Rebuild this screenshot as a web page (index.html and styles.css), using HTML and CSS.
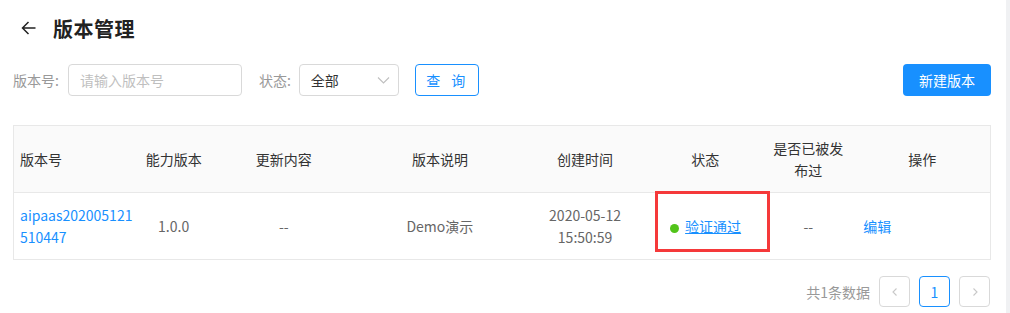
FILE: index.html
```html
<!DOCTYPE html>
<html lang="zh-CN">
<head>
    <meta charset="UTF-8">
    <title>版本管理</title>
    <link rel="stylesheet" href="styles.css">
</head>
<body>
    <div class="page">
        <div class="title-bar">
            <svg class="back" width="16" height="16" viewBox="0 0 16 16">
                <path d="M14.5 8H1.5M7.5 2L1.5 8l6 6" fill="none" stroke="#222" stroke-width="1.5"/>
            </svg>
            <h1>版本管理</h1>
        </div>

        <div class="filters">
            <label class="label">版本号:</label>
            <input class="input" type="text" placeholder="请输入版本号">
            <label class="label status-label">状态:</label>
            <div class="select">
                <span>全部</span>
                <svg width="13" height="12" viewBox="0 0 13 12">
                    <path d="M1 3.5l5.5 5.5 5.5-5.5" fill="none" stroke="#bfbfbf" stroke-width="1.1"/>
                </svg>
            </div>
            <button class="btn-ghost">查 询</button>
            <button class="btn-primary">新建版本</button>
        </div>

        <table class="grid">
            <colgroup>
                <col style="width:124px">
                <col style="width:72px">
                <col style="width:148px">
                <col style="width:164px">
                <col style="width:126px">
                <col style="width:114px">
                <col style="width:92px">
                <col style="width:136px">
            </colgroup>
            <thead>
                <tr>
                    <th class="left">版本号</th>
                    <th>能力版本</th>
                    <th>更新内容</th>
                    <th>版本说明</th>
                    <th>创建时间</th>
                    <th>状态</th>
                    <th>是否已被发布过</th>
                    <th>操作</th>
                </tr>
            </thead>
            <tbody>
                <tr>
                    <td class="left"><a class="link">aipaas202005121510447</a></td>
                    <td>1.0.0</td>
                    <td>--</td>
                    <td>Demo演示</td>
                    <td>2020-05-12<br>15:50:59</td>
                    <td class="status-cell">
                        <span class="dot"></span><a class="link underline">验证通过</a>
                        <div class="mark"></div>
                    </td>
                    <td>--</td>
                    <td class="op"><a class="link">编辑</a></td>
                </tr>
            </tbody>
        </table>

        <div class="pager">
            <span class="total">共1条数据</span>
            <button class="pg">
                <svg width="10" height="10" viewBox="0 0 10 10"><path d="M6.5 1.5L3 5l3.5 3.5" fill="none" stroke="#c8c8c8" stroke-width="1.1"/></svg>
            </button>
            <button class="pg active">1</button>
            <button class="pg">
                <svg width="10" height="10" viewBox="0 0 10 10"><path d="M3.5 1.5L7 5l-3.5 3.5" fill="none" stroke="#c8c8c8" stroke-width="1.1"/></svg>
            </button>
        </div>
    </div>
</body>
</html>
```

FILE: styles.css
```css
html, body {
    margin: 0;
    background-color: #f0f1f3;
}
body {
    font-family: "Noto Sans CJK SC", "Noto Sans", sans-serif;
    font-size: 14px;
    color: #333;
}
.page {
    width: 1006px;
    height: 313px;
    background-color: #fff;
    box-sizing: border-box;
    padding: 0 15px 0 13px;
}
.title-bar {
    display: flex;
    align-items: center;
    height: 56px;
    padding-left: 8px;
}
.back {
    margin-right: 16px;
}
h1 {
    margin: 0;
    font-size: 20px;
    font-weight: bold;
    color: #222;
    letter-spacing: 0.5px;
}
.filters {
    display: flex;
    align-items: center;
    height: 32px;
    margin-top: 8px;
}
.label {
    color: #999;
    margin-right: 9px;
}
.status-label {
    margin-left: 17px;
    margin-right: 8px;
}
.input {
    width: 174px;
    height: 32px;
    box-sizing: border-box;
    border: 1px solid #d9d9d9;
    border-radius: 4px;
    padding: 0 11px;
    font-family: inherit;
    font-size: 14px;
    outline: none;
}
.input::placeholder {
    color: #bfbfbf;
}
.select {
    width: 100px;
    height: 32px;
    box-sizing: border-box;
    border: 1px solid #d9d9d9;
    border-radius: 4px;
    padding: 0 8px 0 11px;
    display: flex;
    align-items: center;
    justify-content: space-between;
    color: #333;
}
.btn-ghost {
    margin-left: 16px;
    width: 64px;
    height: 32px;
    border: 1px solid #1890ff;
    border-radius: 4px;
    background: #fff;
    color: #1890ff;
    font-family: inherit;
    font-size: 14px;
    letter-spacing: 4px;
    padding-left: 8px;
}
.btn-primary {
    margin-left: auto;
    width: 88px;
    height: 32px;
    border: none;
    border-radius: 4px;
    background: #1890ff;
    color: #fff;
    font-family: inherit;
    font-size: 14px;
}
.grid {
    margin-top: 29px;
    width: 978px;
    table-layout: fixed;
    border-collapse: collapse;
    border: 1px solid #e8e8e8;
}
.grid th, .grid td {
    padding: 0 8px;
    text-align: center;
    line-height: 22px;
}
.grid th {
    height: 66px;
    background: #fafafa;
    font-weight: normal;
    color: #333;
    border-bottom: 1px solid #e8e8e8;
}
.grid td {
    height: 66px;
    color: #666;
    word-break: break-all;
}
.grid .left {
    text-align: left;
    padding-left: 6px;
    padding-right: 3px;
}
.grid .op {
    text-align: left;
    padding-left: 9px;
}
.link {
    color: #1890ff;
}
.underline {
    text-decoration: underline;
}
.status-cell {
    position: relative;
    text-align: left !important;
    padding-left: 22px !important;
}
.dot {
    display: inline-block;
    width: 9px;
    height: 9px;
    border-radius: 50%;
    background: #52c41a;
    margin-right: 6px;
    vertical-align: -1px;
}
.mark {
    position: absolute;
    left: 7px;
    top: -2px;
    width: 109px;
    height: 55px;
    border: 3px solid #f5393a;
}
.pager {
    display: flex;
    justify-content: flex-end;
    align-items: center;
    gap: 9px;
    margin-top: 16px;
    padding-right: 1px;
}
.total {
    color: #999;
}
.pg {
    width: 31px;
    height: 31px;
    padding: 0;
    border: 1px solid #d9d9d9;
    border-radius: 4px;
    background: #fff;
    display: flex;
    align-items: center;
    justify-content: center;
    font-family: inherit;
    font-size: 14px;
    color: #1890ff;
}
.pg.active {
    border-color: #1890ff;
}
```
